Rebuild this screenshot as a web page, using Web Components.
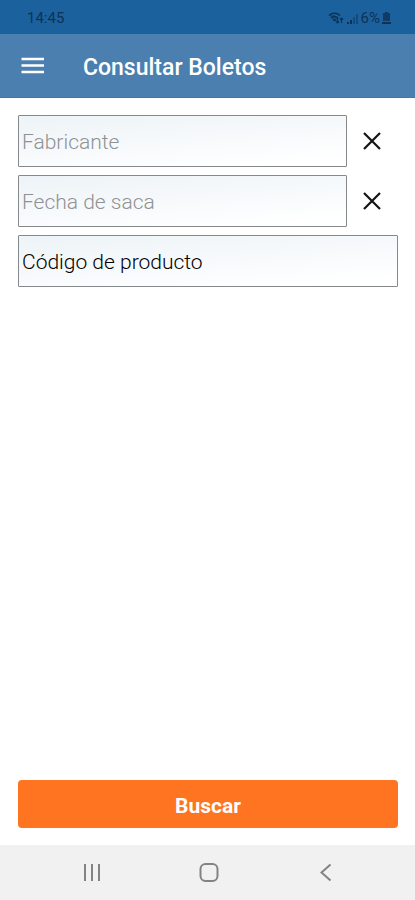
<!DOCTYPE html>
<html lang="es">
<head>
<meta charset="utf-8">
<meta name="viewport" content="width=device-width, initial-scale=1">
<title>Consultar Boletos</title>
<style>
body { margin: 0; font-family: Roboto, "Liberation Sans", sans-serif; background: #fff; }
</style>
</head>
<body>
<ticket-screen></ticket-screen>
<script>
const define = (name, html, setup) => customElements.define(name, class extends HTMLElement {
  constructor() {
    super();
    this.attachShadow({ mode: 'open' });
  }
  connectedCallback() {
    this.shadowRoot.innerHTML = '<style>*{box-sizing:border-box}button{font:inherit;border:0;padding:0;background:none;color:inherit;cursor:pointer}svg{display:block}</style>' + html;
    if (setup) setup(this, this.shadowRoot);
  }
});

define('status-bar', `
<style>
:host { display: flex; justify-content: space-between; align-items: center; height: 34px; padding: 2px 24px 0 27px; background: #1b619d; color: #0e3257; font-size: 15px; line-height: 18px; box-sizing: border-box; }
.state { display: flex; align-items: center; gap: 2px; }
</style>
<span>14:45</span>
<div class="state">
  <svg width="16" height="14" viewBox="0 0 16 14" fill="none" stroke="currentColor" stroke-width="1.6" aria-hidden="true"><path d="M1 4.500C4 1.500 9 1.500 12 4.500M3 7c2-2 5-2 7 0M5 9.300c1-.8 2-.8 3 0"/><path d="M9.500 7v5M8 10.500l1.500 1.500 1.500-1.500M13.500 12V7M12 8.500 13.500 7 15 8.500" stroke-width="1.200"/><path d="m1.500 4 5 7 3-4-3-3z" fill="currentColor" stroke="none" opacity=".4"/></svg>
  <svg width="13" height="13" viewBox="0 0 13 13" fill="currentColor" aria-hidden="true"><path d="M1 10h2v2H1z"/><path d="M4 8h2v4H4z"/><path d="M7 5h2v7H7zM10 2h2v10h-2z" opacity=".5"/></svg>
  <span>6%</span>
  <svg width="9" height="13" viewBox="0 0 9 13" fill="currentColor" aria-hidden="true"><path d="M3 0h3v1h2v8H1V1h2z" opacity=".8"/><path d="M0 10h9v2H0z"/></svg>
</div>`);

define('app-bar', `
<style>
:host { display: flex; align-items: center; gap: 35px; height: 64px; padding: 0 18px; background: #4a7fb0; border-bottom: 1px solid #3e78ac; color: #fff; box-sizing: border-box; }
h1 { margin: 0; padding-top: 4px; font-size: 23px; line-height: 28px; font-weight: 500; }
</style>
<button aria-label="Menú"><svg width="30" height="30" viewBox="0 0 30 30" stroke="#fff" stroke-width="2.500"><path d="M3.500 8h22.500M3.500 14.500h22.500M3.500 21h22.500"/></svg></button>
<h1><slot></slot></h1>`);

define('search-field', `
<style>
:host { display: flex; align-items: center; }
input { flex: 1; min-width: 0; height: 52px; padding: 2px 3px 0; border: 1px solid #85898c; border-radius: 1px; background: linear-gradient(175deg, #edf3f7, #fff 90%); font: inherit; font-size: 21px; line-height: 28px; font-weight: 300; color: #000; outline: 0; }
input::placeholder { color: #8f9294; opacity: 1; }
button { display: grid; align-items: center; width: 51px; height: 52px; padding-left: 15px; color: #141414; }
</style>
<input type="text"><button type="button"><svg width="20" height="20" viewBox="0 0 20 20" fill="none" stroke="currentColor" stroke-width="2.200"><path d="m2 2 16 16M18 2 2 18"/></svg></button>`,
(host, root) => {
  const input = root.querySelector('input');
  const clear = root.querySelector('button');
  const label = host.getAttribute('label');
  input.setAttribute('aria-label', label);
  if (host.hasAttribute('value')) input.value = host.getAttribute('value');
  else input.placeholder = label;
  if (host.hasAttribute('clearable')) {
    clear.setAttribute('aria-label', 'Borrar ' + label);
    clear.addEventListener('click', () => { input.value = ''; });
  } else clear.remove();
});

define('action-button', `
<style>
:host { display: block; }
button { display: block; width: 100%; height: 48px; padding-top: 4px; border-radius: 4px; background: #ff7421; color: #fff; font-size: 21px; line-height: 24px; font-weight: 700; }
</style>
<button type="button"><slot></slot></button>`);

define('navigation-bar', `
<style>
:host { display: grid; grid-template-columns: repeat(3, 1fr); height: 55px; padding: 0 31px 0 34px; background: #f1f1f1; color: #838383; box-sizing: border-box; }
button { display: grid; place-items: center; height: 55px; }
svg { fill: none; stroke: currentColor; stroke-width: 2; }
</style>
<button aria-label="Recientes"><svg width="20" height="20" viewBox="0 0 20 20"><path d="M3 1v17M10 1v17M17 1v17"/></svg></button>
<button aria-label="Inicio"><svg width="20" height="20" viewBox="0 0 20 20"><rect x="1.500" y="1" width="17" height="17" rx="5"/></svg></button>
<button aria-label="Atrás"><svg width="20" height="20" viewBox="0 0 20 20"><path d="m14.500 1.500-9 8 9 8"/></svg></button>`);

define('ticket-screen', `
<style>
:host { display: flex; flex-direction: column; min-height: 100vh; }
main { flex: 1; display: flex; flex-direction: column; justify-content: space-between; padding: 17px 17px 17px 18px; }
form { display: grid; gap: 8px; }
</style>
<status-bar></status-bar>
<app-bar>Consultar Boletos</app-bar>
<main>
  <form>
    <search-field label="Fabricante" clearable></search-field>
    <search-field label="Fecha de saca" clearable></search-field>
    <search-field label="Código de producto" value="Código de producto"></search-field>
  </form>
  <action-button>Buscar</action-button>
</main>
<navigation-bar></navigation-bar>`);
</script>
</body>
</html>
